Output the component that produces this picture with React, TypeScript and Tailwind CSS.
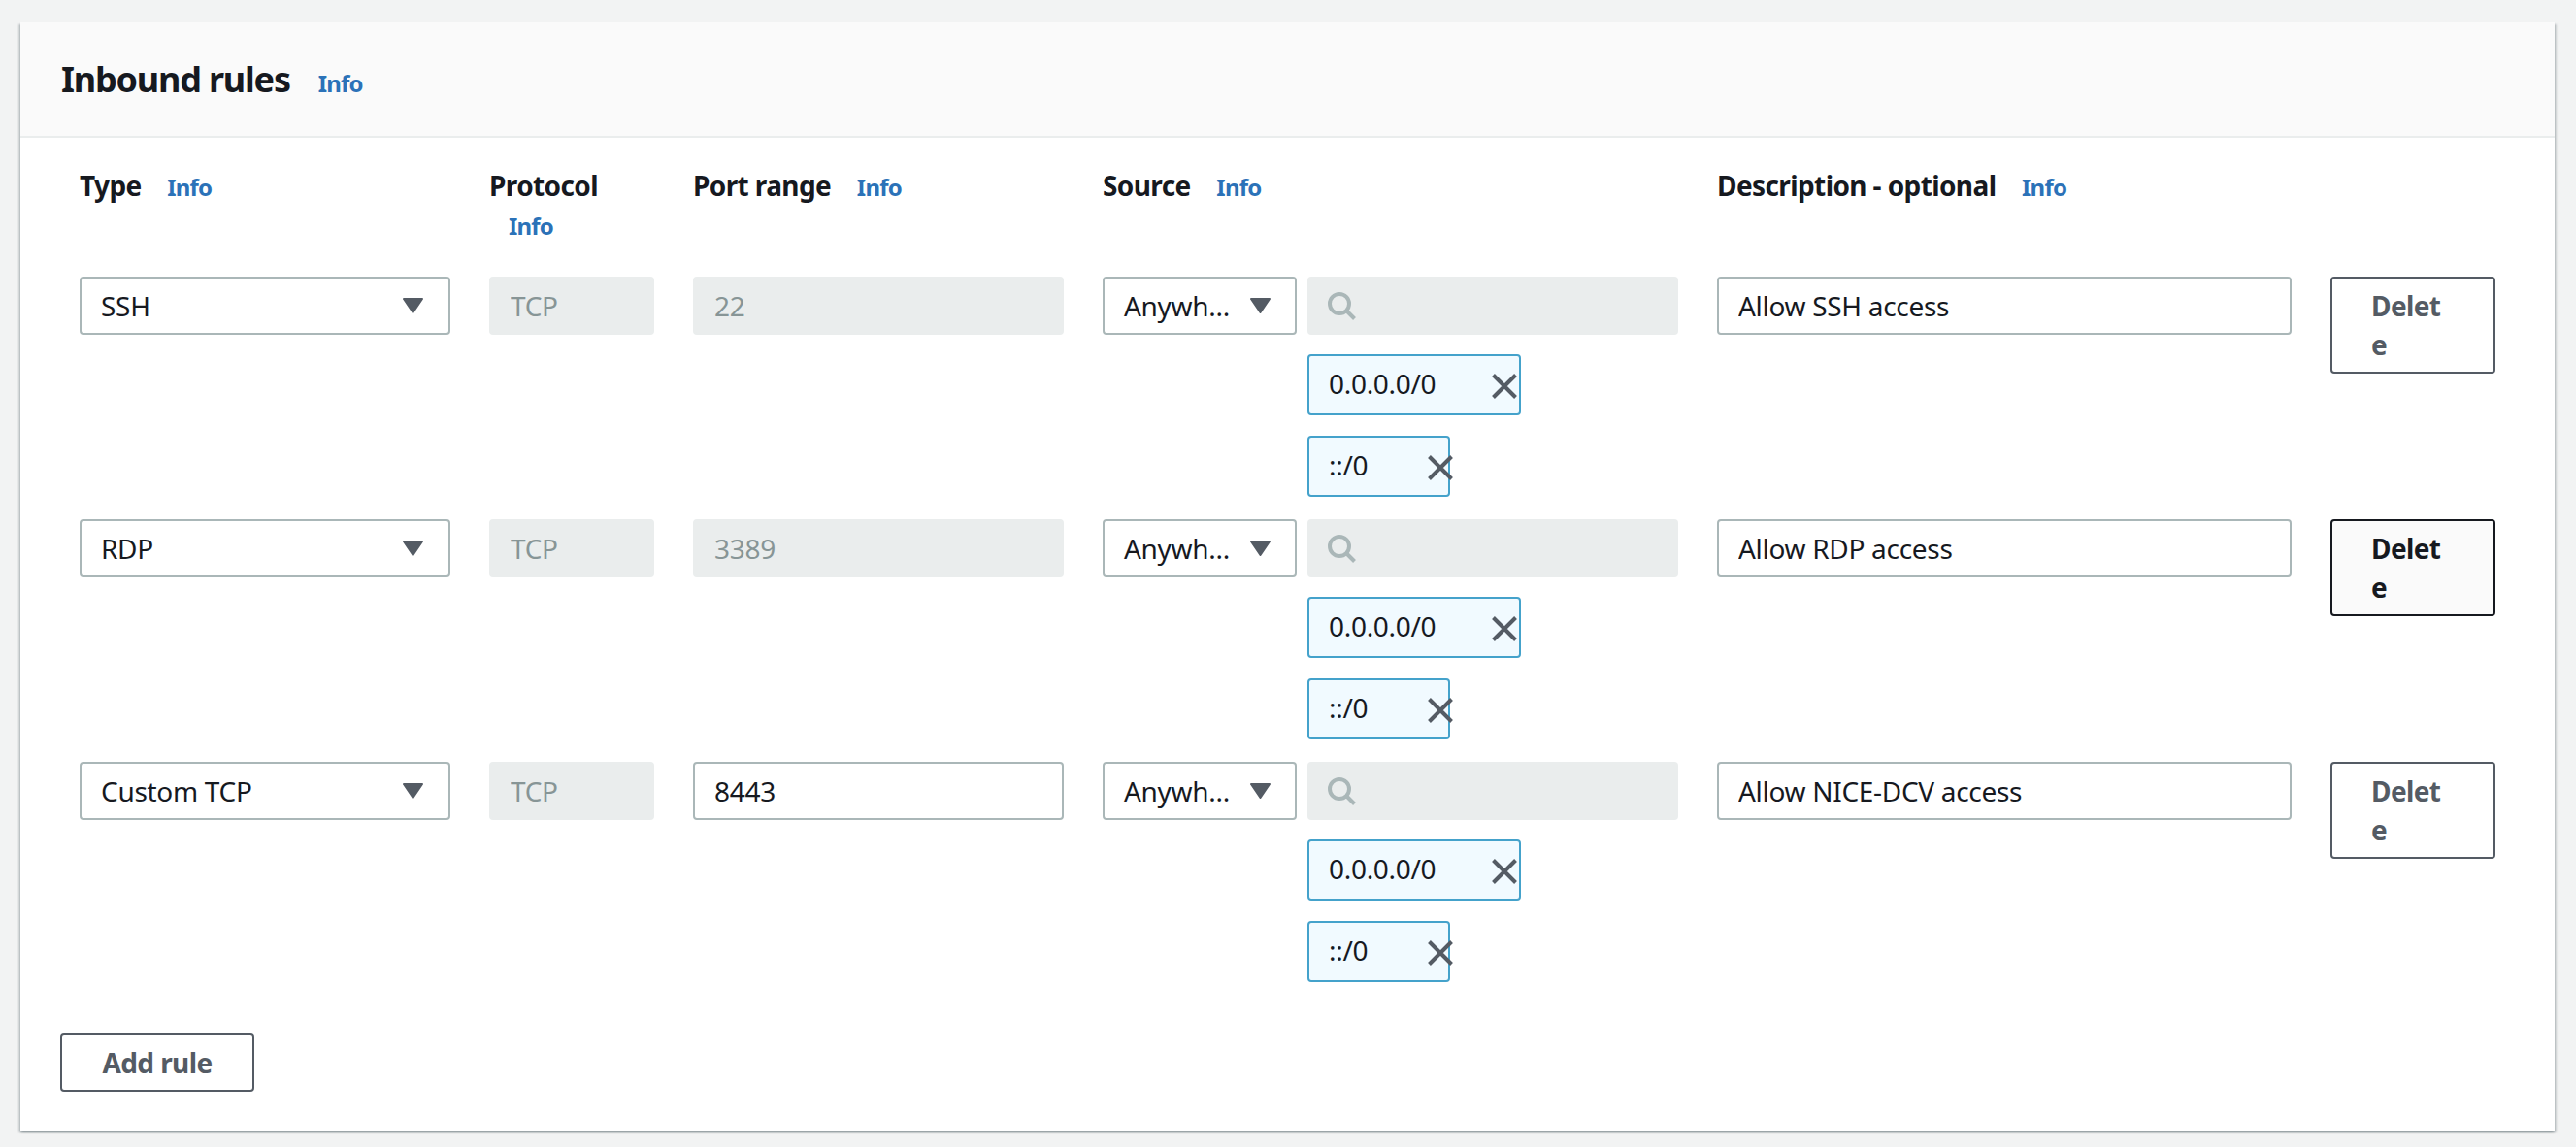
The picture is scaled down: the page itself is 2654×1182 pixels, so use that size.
const font = "font-['Noto_Sans','Liberation_Sans',sans-serif]";

function Info({ className = '' }: { className?: string }) {
  return <a className={`text-[24px] font-bold tracking-[-0.8px] text-[#2b72b8] ${className}`}>Info</a>;
}

function Caret() {
  return (
    <svg width="21" height="16" viewBox="0 0 21 16" className="shrink-0">
      <path d="M1 1h19L10.5 15z" fill="#545b64" stroke="#545b64" strokeWidth="2" strokeLinejoin="round" />
    </svg>
  );
}

function Cross() {
  return (
    <svg width="26" height="26" viewBox="0 0 26 26" className="mt-[2px] shrink-0">
      <path d="M1.5 1.5l23 23M24.5 1.5l-23 23" fill="none" stroke="#545b64" strokeWidth="4" />
    </svg>
  );
}

function Select({ value, className = '' }: { value: string; className?: string }) {
  return (
    <div className={`flex h-[60px] items-center justify-between rounded-[4px] border-2 border-[#aab7b8] bg-white text-[#16191f] ${className}`}>
      <span>{value}</span>
      <Caret />
    </div>
  );
}

function Field({ value, disabled = false }: { value: string; disabled?: boolean }) {
  return (
    <input
      readOnly
      disabled={disabled}
      value={value}
      className={
        disabled
          ? 'h-[60px] w-full rounded-[4px] border-2 border-[#eaeded] bg-[#eaeded] px-5 text-[#879596] outline-none'
          : 'h-[60px] w-full rounded-[4px] border-2 border-[#aab7b8] bg-white px-5 text-[#16191f] outline-none'
      }
    />
  );
}

function Token({ label, short = false }: { label: string; short?: boolean }) {
  return (
    <div
      className={`flex h-[63px] items-center justify-between rounded-[4px] border-2 border-[#44a2cb] bg-[#f1faff] pl-5 text-[#16191f] ${
        short ? 'w-[147px] pr-0' : 'w-[220px] pr-[2px]'
      }`}
    >
      <span className="-mt-[3px]">{label}</span>
      <span className={short ? '-mr-[5px]' : ''}>
        <Cross />
      </span>
    </div>
  );
}

function SourceCell() {
  return (
    <div className="grid grid-cols-[200px_382px] gap-x-[11px]">
      <Select value="Anywh..." className="pl-5 pr-[25px]" />
      <div className="flex h-[60px] items-center rounded-[4px] bg-[#eaeded] pl-[21px]">
        <svg width="29" height="29" viewBox="0 0 29 29">
          <circle cx="12" cy="12" r="10" fill="none" stroke="#aab7b8" strokeWidth="4" />
          <path d="M19 19l8.5 8.5" fill="none" stroke="#aab7b8" strokeWidth="4" />
        </svg>
      </div>
      <div className="col-start-2 mt-5 flex flex-col gap-[21px]">
        <Token label="0.0.0.0/0" />
        <Token label="::/0" short />
      </div>
    </div>
  );
}

function Rule({ type, port, portEditable = false, description, hovered = false }: {
  type: string;
  port: string;
  portEditable?: boolean;
  description: string;
  hovered?: boolean;
}) {
  return (
    <>
      <Select value={type} className="pl-5 pr-[26px]" />
      <Field value="TCP" disabled />
      <Field value={port} disabled={!portEditable} />
      <SourceCell />
      <Field value={description} />
      <button
        className={`h-[100px] self-start rounded-[4px] border-2 px-10 py-2 text-left font-bold tracking-[-0.6px] ${
          hovered ? 'border-[#16191f] bg-[#fafafa] text-[#16191f]' : 'border-[#545b64] bg-white text-[#545b64]'
        }`}
      >
        Delet
        <br />e
      </button>
    </>
  );
}

export default function App() {
  return (
    <div className={`min-h-[1182px] bg-[#f2f3f3] pl-[21px] pr-[22px] pt-[23px] text-[28px] leading-[40px] tracking-[-0.3px] ${font}`}>
      <div className="bg-white shadow-[0_2px_2px_0_rgba(0,28,36,0.3),2px_2px_2px_0_rgba(0,28,36,0.15),-2px_2px_2px_0_rgba(0,28,36,0.15)]">
        <div className="flex h-[119px] items-baseline gap-[29px] border-b-2 border-[#eaeded] bg-[#fafafa] pl-[42px] pt-[39px]">
          <h2 className="text-[36px] font-bold tracking-[-1.2px] text-[#16191f]">Inbound rules</h2>
          <Info />
        </div>
        <div className="px-[41px] pb-10 pt-[29px]">
          <div className="grid grid-cols-[382px_170px_382px_593px_592px_170px] gap-x-10 gap-y-[23px] pl-5">
            <div className="h-[91px] font-bold tracking-[-0.6px] text-[#16191f]">
              Type <Info className="ml-5" />
            </div>
            <div className="h-[91px] font-bold tracking-[-0.6px] text-[#16191f]">
              Protocol <Info className="ml-5 inline-block" />
            </div>
            <div className="h-[91px] font-bold tracking-[-0.6px] text-[#16191f]">
              Port range <Info className="ml-5" />
            </div>
            <div className="h-[91px] font-bold tracking-[-0.6px] text-[#16191f]">
              Source <Info className="ml-5" />
            </div>
            <div className="col-span-2 h-[91px] font-bold tracking-[-0.6px] text-[#16191f]">
              Description - optional <Info className="ml-5" />
            </div>

            <Rule type="SSH" port="22" description="Allow SSH access" />
            <Rule type="RDP" port="3389" description="Allow RDP access" hovered />
            <Rule type="Custom TCP" port="8443" portEditable description="Allow NICE-DCV access" />
          </div>
          <button className="mt-[53px] block h-[60px] w-[200px] rounded-[4px] border-2 border-[#545b64] bg-white font-bold tracking-[-0.6px] text-[#545b64]">
            Add rule
          </button>
        </div>
      </div>
    </div>
  );
}
